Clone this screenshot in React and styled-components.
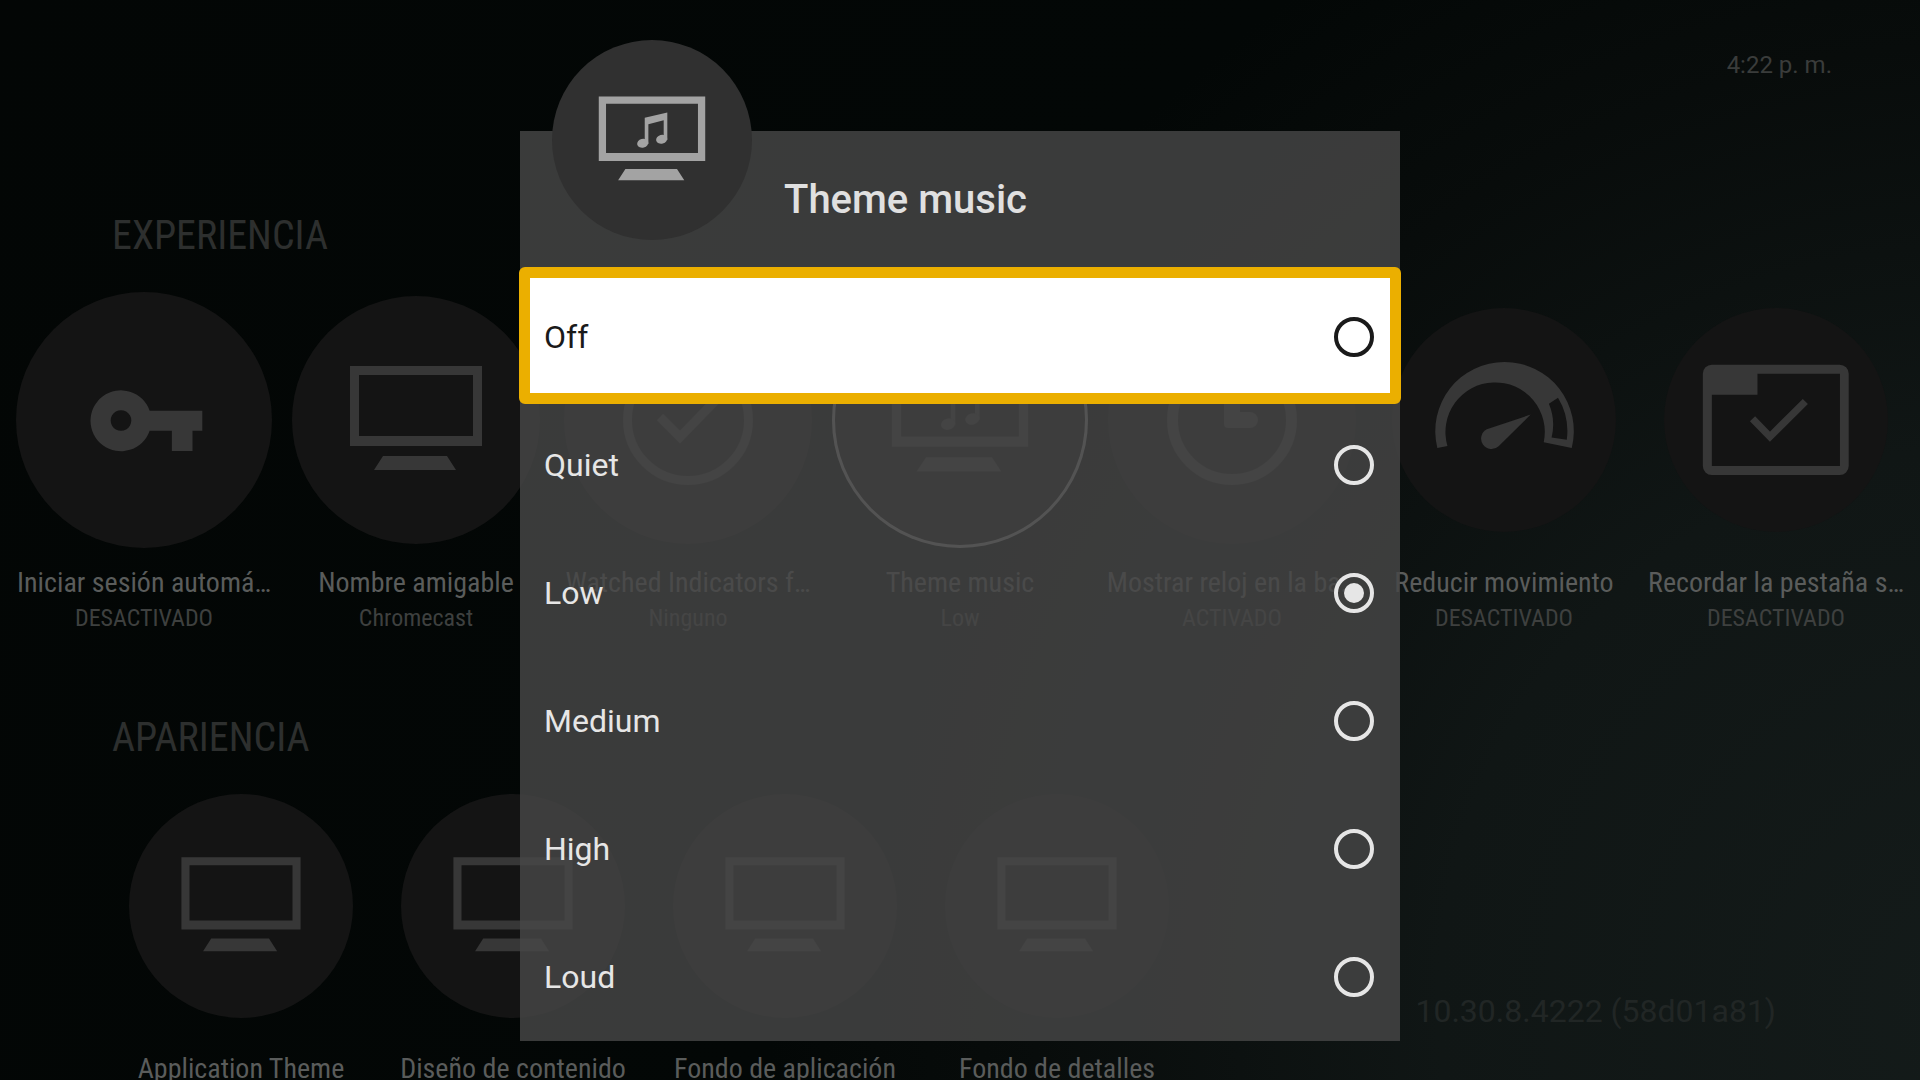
import React, { useState } from "react";
import styled, { createGlobalStyle, css } from "styled-components";

const GlobalStyle = createGlobalStyle`
  * {
    box-sizing: border-box;
  }
  body {
    margin: 0;
    background: #020605;
    font-family: Roboto, "Liberation Sans", sans-serif;
  }
  button {
    margin: 0;
    padding: 0;
    border: 0;
    background: none;
    color: inherit;
    font: inherit;
  }
`;

const options = ["Off", "Quiet", "Low", "Medium", "High", "Loud"];

const experience = [
  { label: "Iniciar sesión automá…", value: "DESACTIVADO", icon: "key", size: 256 },
  { label: "Nombre amigable", value: "Chromecast", icon: "tv", size: 248 },
  { label: "Watched Indicators f…", value: "Ninguno", icon: "check", size: 248 },
  { label: "Theme music", value: "Low", icon: "music", size: 256, active: true },
  { label: "Mostrar reloj en la ba…", value: "ACTIVADO", icon: "clock", size: 248 },
  { label: "Reducir movimiento", value: "DESACTIVADO", icon: "speed", size: 224 },
  { label: "Recordar la pestaña s…", value: "DESACTIVADO", icon: "tab", size: 224 }
];

const appearance = [
  { label: "Application Theme", icon: "tv", size: 224 },
  { label: "Diseño de contenido", icon: "tv", size: 224 },
  { label: "Fondo de aplicación", icon: "tv", size: 224 },
  { label: "Fondo de detalles", icon: "tv", size: 224 }
];

const tv = (
  <path
    fillRule="evenodd"
    d="M58 70H190V150H58ZM67 79V140H181V79ZM91 160H155L164 174H82Z"
  />
);

const shapes = {
  tv,
  music: (
    <>
      {tv}
      <path d="M115 96.500L143 90V124H138.500V99.500L119.500 104.500V129H115Z" />
      <ellipse cx="112.500" cy="128" rx="7" ry="5.500" transform="rotate(-15 112.500 128)" />
      <ellipse cx="136" cy="123" rx="7" ry="5.500" transform="rotate(-15 136 123)" />
    </>
  ),
  key: (
    <path
      fillRule="evenodd"
      d="M129.500 115H180.500V134.500H171V154H151V134.500H129.500A29.500 29.500 0 1 1 129.500 115ZM101.700 114.500a10 10 0 1 0 .01 0Z"
    />
  ),
  check: (
    <g fill="none" stroke="currentColor" strokeWidth="9">
      <circle cx="124" cy="124" r="60.500" />
      <path d="M96 121L116 141L154 102" />
    </g>
  ),
  clock: (
    <>
      <circle cx="124" cy="124" r="59.500" fill="none" stroke="currentColor" strokeWidth="11" />
      <path d="M116 84H132V116H142A8 8 0 0 1 142 132H120A4 4 0 0 1 116 128Z" />
    </>
  ),
  speed: (
    <>
      <path
        fillRule="evenodd"
        d="M50.200 155A76.700 76.700 0 1 1 199 155L168 148.700A55 55 0 1 0 61.400 152.800ZM183.800 99.300L173.700 106A60 60 0 0 1 176.700 143.500L193.500 146A72 72 0 0 0 183.800 99.300Z"
      />
      <path d="M153.500 118L118 153A11.500 11.500 0 1 1 105 134.300Z" />
    </>
  ),
  tab: (
    <>
      <path
        fillRule="evenodd"
        d="M53 62.700H194.500A10 10 0 0 1 204.500 72.700V175A10 10 0 0 1 194.500 185H53A10 10 0 0 1 43 175V72.700A10 10 0 0 1 53 62.700ZM103.500 72.700V96H53V175H194.800V72.700Z"
      />
      <path
        d="M98 122.500L117.300 142.500L156.500 103.500"
        fill="none"
        stroke="currentColor"
        strokeWidth="8"
      />
    </>
  )
};

const Icon = ({ name }) => (
  <Drawing viewBox="0 0 248 248" fill="currentColor" aria-hidden="true">
    {shapes[name]}
  </Drawing>
);

const TileRow = ({ items, inset }) => (
  <Tiles $inset={inset}>
    {items.map(item => (
      <Tile key={item.label} type="button">
        <Slot>
          <Disc $size={item.size} $active={item.active}>
            <Icon name={item.icon} />
          </Disc>
        </Slot>
        <Label>{item.label}</Label>
        {item.value && <Value>{item.value}</Value>}
      </Tile>
    ))}
  </Tiles>
);

export default function App() {
  const [selected, setSelected] = useState("Low");

  return (
    <Page>
      <GlobalStyle />
      <TopBar>4:22 p. m.</TopBar>

      <Section>
        <Heading $gap={32}>EXPERIENCIA</Heading>
        <TileRow items={experience} inset={8} />
      </Section>

      <Section>
        <Heading $gap={16}>APARIENCIA</Heading>
        <TileRow items={appearance} inset={105} />
        <Version>10.30.8.4222 (58d01a81)</Version>
      </Section>

      <Overlay>
        <Dialog role="dialog" aria-labelledby="dialog-title">
          <DialogHeader>
            <DialogDisc>
              <Icon name="music" />
            </DialogDisc>
            <Title id="dialog-title">Theme music</Title>
          </DialogHeader>
          {options.map(option => (
            <Option key={option} $focused={option === "Off"}>
              {option}
              <Radio
                type="radio"
                name="theme-music"
                value={option}
                checked={selected === option}
                onChange={() => setSelected(option)}
              />
            </Option>
          ))}
        </Dialog>
      </Overlay>
    </Page>
  );
}

const condensed = css`
  font-family: "Roboto Condensed", "Liberation Sans Narrow", Roboto, sans-serif;
`;

const Page = styled.main`
  position: relative;
  height: 100vh;
  overflow: hidden;
  background: radial-gradient(
    circle at 104% 93%,
    #141b1a 0%,
    #101615 25%,
    #080c0b 43%,
    #030706 55%,
    #030605 100%
  );
`;

const TopBar = styled.header`
  padding: 49px 88px 0;
  color: #3a3c3b;
  font-size: 24px;
  line-height: 32px;
  text-align: right;
`;

const Section = styled.section`
  display: grid;
  grid-template-columns: auto 1fr;
  margin-top: 80px;

  ${TopBar} + & {
    margin-top: 131px;
  }
`;

const Heading = styled.h2`
  ${condensed}
  grid-column: 1 / -1;
  margin: 0 0 ${props => props.$gap}px;
  padding-left: 112px;
  color: #2d2f2e;
  font-size: 40px;
  font-weight: 400;
  line-height: 48px;
`;

const Tiles = styled.div`
  display: flex;
  padding-left: ${props => props.$inset}px;
`;

const Tile = styled.button`
  flex: none;
  display: flex;
  flex-direction: column;
  align-items: center;
  width: 272px;
`;

const Slot = styled.span`
  display: flex;
  align-items: center;
  justify-content: center;
  height: 256px;
  margin-bottom: 16px;
`;

const Disc = styled.span`
  width: ${props => props.$size}px;
  height: ${props => props.$size}px;
  border-radius: 50%;
  background: #141414;
  color: #373737;
  box-shadow: ${props => (props.$active ? "inset 0 0 0 3px #8c8c8c" : "none")};
`;

const Drawing = styled.svg`
  display: block;
  width: 100%;
  height: 100%;
`;

const Label = styled.span`
  ${condensed}
  color: #5a5c5b;
  font-size: 28px;
  line-height: 38px;
  white-space: nowrap;
`;

const Value = styled.span`
  ${condensed}
  color: #3e403f;
  font-size: 24px;
  line-height: 32px;
`;

const Version = styled.p`
  align-self: end;
  justify-self: end;
  margin: 0 144px 57px 0;
  color: #212625;
  font-size: 32px;
  line-height: 40px;
`;

const Overlay = styled.div`
  position: absolute;
  inset: 0;
  display: flex;
  align-items: flex-start;
  justify-content: center;
  padding-top: 131px;
`;

const Dialog = styled.div`
  width: 880px;
  max-width: 100%;
  background: rgba(71, 71, 71, 0.82);
  color: #e6e6e6;
`;

const DialogHeader = styled.div`
  display: flex;
  gap: 32px;
  height: 142px;
  padding-left: 32px;
`;

const DialogDisc = styled.div`
  flex: none;
  width: 200px;
  height: 200px;
  margin-top: -91px;
  border-radius: 50%;
  background: #303030;
  color: #a3a3a3;
`;

const Title = styled.h1`
  margin: 45px 0 0;
  color: #e0e0e0;
  font-size: 40px;
  font-weight: 500;
  line-height: 48px;
`;

const Option = styled.label`
  position: relative;
  display: flex;
  align-items: center;
  justify-content: space-between;
  height: 128px;
  padding: 0 26px 0 24px;
  font-size: 32px;

  ${props =>
    props.$focused &&
    css`
      background: #fff;
      color: #1a1a1a;

      &::after {
        content: "";
        position: absolute;
        inset: -6px -1px -3px;
        border: 11px solid #ebaf00;
        border-radius: 6px;
      }
    `}
`;

const Radio = styled.input`
  appearance: none;
  width: 40px;
  height: 40px;
  margin: 0;
  border: 4px solid currentColor;
  border-radius: 50%;
  color: inherit;

  &:checked {
    padding: 6px;
    background: currentColor content-box;
  }
`;
